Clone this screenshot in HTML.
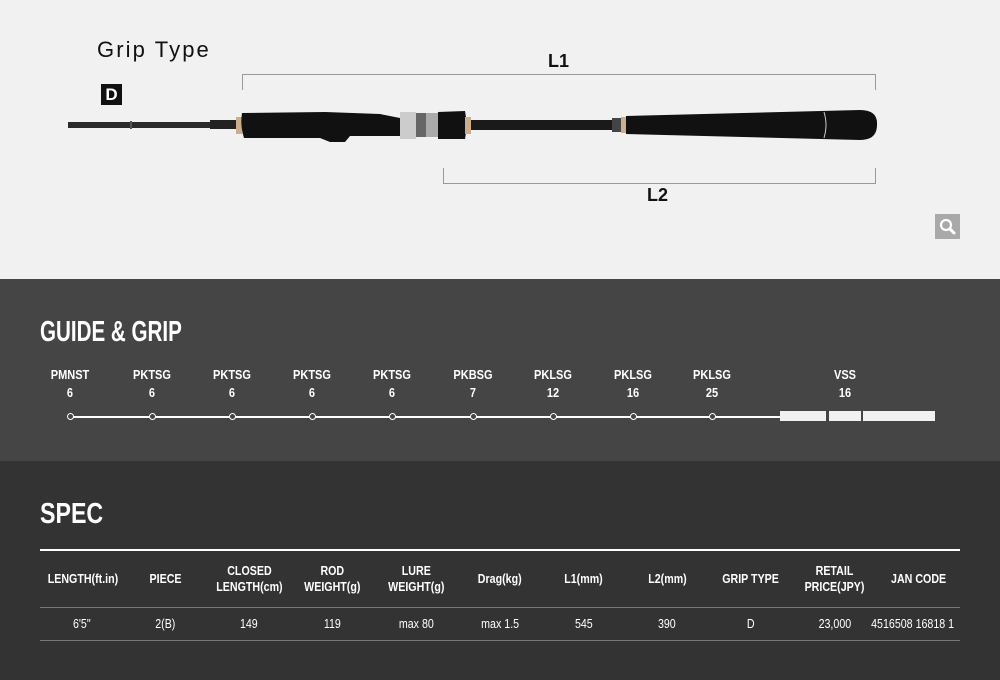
<!DOCTYPE html>
<html><head><meta charset="utf-8"><style>
*{margin:0;padding:0;box-sizing:border-box}
body{width:1000px;height:680px;overflow:hidden;font-family:"Liberation Sans",sans-serif;background:#333}
.top{position:absolute;left:0;top:0;width:1000px;height:279px;background:#f1f1f1}
.guide{position:absolute;left:0;top:279px;width:1000px;height:182px;background:#454545}
.spec{position:absolute;left:0;top:461px;width:1000px;height:219px;background:#333}
.abs{position:absolute}
h2{position:absolute;color:#fff;font-weight:bold;font-size:29px;transform-origin:0 0;white-space:nowrap}
.g{position:absolute;top:366px;width:80px;margin-left:-40px;text-align:center;color:#fff;font-weight:bold;font-size:12.5px;line-height:18px;transform:scaleX(.88)}
.dot{position:absolute;top:413px;width:7px;height:7px;margin-left:-3.5px;border:1.3px solid #fff;border-radius:50%;background:#454545}
table{position:absolute;left:40px;top:549px;width:920px;border-collapse:collapse;color:#fff;font-size:13px;font-weight:bold;text-align:center;table-layout:fixed;border-top:2px solid #fff}
th{height:57px;line-height:16px;border-bottom:1px solid #777}
td{height:33px;font-weight:normal;border-bottom:1px solid #777}
th span,td span{display:inline-block;transform:scaleX(.82);white-space:nowrap}
</style></head><body>
<div class="top">
<div class="abs" style="left:97px;top:37px;font-size:22px;color:#111;letter-spacing:2.1px">Grip Type</div>
<div class="abs" style="left:101px;top:84px;width:21px;height:21px;background:#111;color:#fff;font-weight:bold;font-size:17px;line-height:21px;text-align:center">D</div>
<div class="abs" style="left:548px;top:51px;font-size:18px;font-weight:bold;color:#111">L1</div>
<div class="abs" style="left:647px;top:185px;font-size:18px;font-weight:bold;color:#111">L2</div>
<svg class="abs" style="left:0;top:0" width="1000" height="279">
<path d="M242.5 90V74.5H875.5V90" fill="none" stroke="#999" stroke-width="1"/>
<path d="M443.5 168V183.5H875.5V168" fill="none" stroke="#999" stroke-width="1"/>
<rect x="68" y="122" width="160" height="6" fill="#2a2a2a"/>
<rect x="130" y="121" width="2" height="8" fill="#555"/>
<rect x="210" y="120" width="30" height="9" fill="#222"/>
<rect x="236" y="117" width="6" height="17" fill="#c9b08a"/>
<path d="M242 113 L325 112 L380 114 L400 118 L400 136 L350 136 L345 142 L330 142 L320 138 L244 138 Q240 126 242 113Z" fill="#111"/>
<rect x="400" y="112" width="16" height="27" fill="#ccc"/>
<rect x="416" y="113" width="10" height="24" fill="#666"/>
<rect x="426" y="113" width="12" height="24" fill="#aaa"/>
<path d="M438 112 L465 111 Q468 125 465 139 L438 139Z" fill="#111"/>
<rect x="465" y="117" width="6" height="17" fill="#c9b08a"/>
<rect x="471" y="120" width="150" height="10" fill="#1a1a1a"/>
<rect x="612" y="118" width="14" height="14" fill="#444"/>
<rect x="621" y="117" width="5" height="16" fill="#c9b08a"/>
<path d="M626 116 L860 110 Q878 110 877 125 Q877 140 860 140 L626 134Z" fill="#111"/>
<path d="M824 112 Q828 125 824 138" stroke="#ccc" stroke-width="1" fill="none"/>
<rect x="935" y="214" width="25" height="25" fill="#a9a9a9"/>
<circle cx="946" cy="225" r="5" fill="none" stroke="#fff" stroke-width="2.2"/>
<path d="M950 229 L954 233" stroke="#fff" stroke-width="3" stroke-linecap="round"/>
</svg>
</div>
<div class="guide">
<h2 style="left:40px;top:37px;transform:scaleX(.71)">GUIDE &amp; GRIP</h2>
</div>
<div class="abs" style="left:70px;top:416px;width:710px;height:2px;background:#fff"></div>
<div class="abs" style="left:780px;top:411px;width:46px;height:10px;background:#f1f1f1"></div>
<div class="abs" style="left:829px;top:411px;width:32px;height:10px;background:#f1f1f1"></div>
<div class="abs" style="left:863px;top:411px;width:72px;height:10px;background:#f1f1f1"></div>
<div class="g" style="left:70px">PMNST<br>6</div><div class="dot" style="left:70px"></div>
<div class="g" style="left:152px">PKTSG<br>6</div><div class="dot" style="left:152px"></div>
<div class="g" style="left:232px">PKTSG<br>6</div><div class="dot" style="left:232px"></div>
<div class="g" style="left:312px">PKTSG<br>6</div><div class="dot" style="left:312px"></div>
<div class="g" style="left:392px">PKTSG<br>6</div><div class="dot" style="left:392px"></div>
<div class="g" style="left:473px">PKBSG<br>7</div><div class="dot" style="left:473px"></div>
<div class="g" style="left:553px">PKLSG<br>12</div><div class="dot" style="left:553px"></div>
<div class="g" style="left:633px">PKLSG<br>16</div><div class="dot" style="left:633px"></div>
<div class="g" style="left:712px">PKLSG<br>25</div><div class="dot" style="left:712px"></div>
<div class="g" style="left:845px">VSS<br>16</div>
<div class="spec"><h2 style="left:40px;top:37px;transform:scaleX(.8)">SPEC</h2></div>
<table>
<tr><th><span>LENGTH(ft.in)</span></th><th><span>PIECE</span></th><th><span>CLOSED<br>LENGTH(cm)</span></th><th><span>ROD<br>WEIGHT(g)</span></th><th><span>LURE<br>WEIGHT(g)</span></th><th><span>Drag(kg)</span></th><th><span>L1(mm)</span></th><th><span>L2(mm)</span></th><th><span>GRIP TYPE</span></th><th><span>RETAIL<br>PRICE(JPY)</span></th><th><span>JAN CODE</span></th></tr>
<tr><td><span>6'5"</span></td><td><span>2(B)</span></td><td><span>149</span></td><td><span>119</span></td><td><span>max 80</span></td><td><span>max 1.5</span></td><td><span>545</span></td><td><span>390</span></td><td><span>D</span></td><td><span>23,000</span></td><td><span style="margin-left:-14px">4516508 16818 1</span></td></tr>
</table>
</body></html>
